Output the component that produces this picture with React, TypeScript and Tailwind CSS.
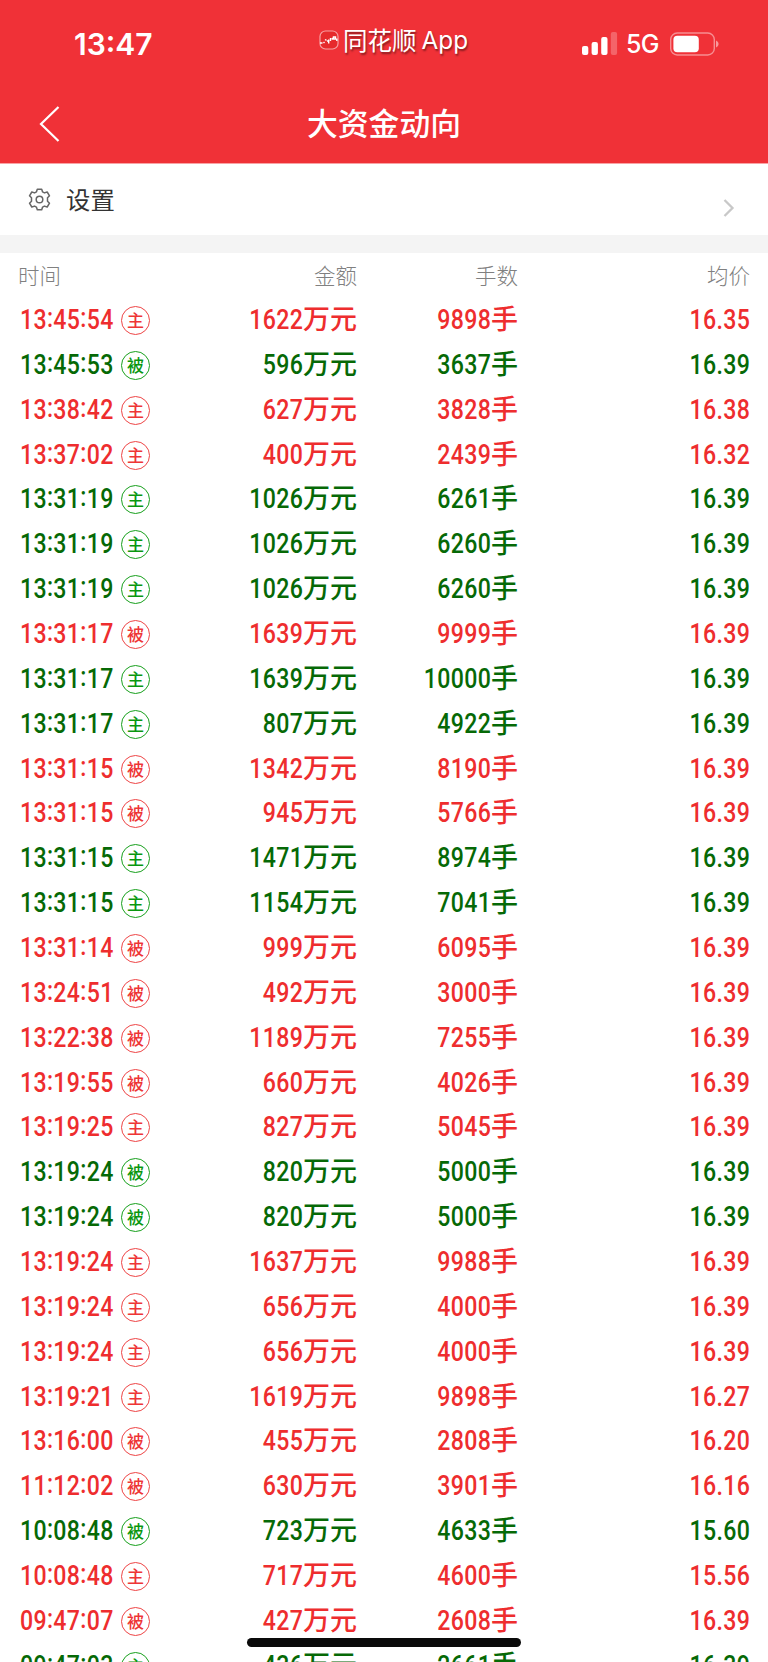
import React from "react";
import clsx from "clsx";

type Trade = {
  time: string;
  kind: "主" | "被";
  side: "buy" | "sell";
  amount: string;
  lots: string;
  price: string;
};

const t = (
  time: string,
  kind: Trade["kind"],
  side: Trade["side"],
  amount: string,
  lots: string,
  price: string,
): Trade => ({ time, kind, side, amount, lots, price });

const trades: Trade[] = [
  t("13:45:54", "主", "buy", "1622", "9898", "16.35"),
  t("13:45:53", "被", "sell", "596", "3637", "16.39"),
  t("13:38:42", "主", "buy", "627", "3828", "16.38"),
  t("13:37:02", "主", "buy", "400", "2439", "16.32"),
  t("13:31:19", "主", "sell", "1026", "6261", "16.39"),
  t("13:31:19", "主", "sell", "1026", "6260", "16.39"),
  t("13:31:19", "主", "sell", "1026", "6260", "16.39"),
  t("13:31:17", "被", "buy", "1639", "9999", "16.39"),
  t("13:31:17", "主", "sell", "1639", "10000", "16.39"),
  t("13:31:17", "主", "sell", "807", "4922", "16.39"),
  t("13:31:15", "被", "buy", "1342", "8190", "16.39"),
  t("13:31:15", "被", "buy", "945", "5766", "16.39"),
  t("13:31:15", "主", "sell", "1471", "8974", "16.39"),
  t("13:31:15", "主", "sell", "1154", "7041", "16.39"),
  t("13:31:14", "被", "buy", "999", "6095", "16.39"),
  t("13:24:51", "被", "buy", "492", "3000", "16.39"),
  t("13:22:38", "被", "buy", "1189", "7255", "16.39"),
  t("13:19:55", "被", "buy", "660", "4026", "16.39"),
  t("13:19:25", "主", "buy", "827", "5045", "16.39"),
  t("13:19:24", "被", "sell", "820", "5000", "16.39"),
  t("13:19:24", "被", "sell", "820", "5000", "16.39"),
  t("13:19:24", "主", "buy", "1637", "9988", "16.39"),
  t("13:19:24", "主", "buy", "656", "4000", "16.39"),
  t("13:19:24", "主", "buy", "656", "4000", "16.39"),
  t("13:19:21", "主", "buy", "1619", "9898", "16.27"),
  t("13:16:00", "被", "buy", "455", "2808", "16.20"),
  t("11:12:02", "被", "buy", "630", "3901", "16.16"),
  t("10:08:48", "被", "sell", "723", "4633", "15.60"),
  t("10:08:48", "主", "buy", "717", "4600", "15.56"),
  t("09:47:07", "被", "buy", "427", "2608", "16.39"),
  t("09:47:03", "主", "sell", "436", "2661", "16.39"),
];

const AppLogo = () => (
  <svg width="20" height="20" viewBox="0 0 20 20" fill="none">
    <rect x="1" y="1" width="18" height="18" rx="5.5" fill="#e62a2c" stroke="#fff" strokeOpacity="0.55" strokeWidth="1.2" />
    <path
      d="M1 13h2.500M4.500 13l1-1M6 9.500l1.500.8M8 11h1.600M9.700 9.500v4M11.500 8v3M12.800 9.500l1-1.500M14.500 7h2v2h-2zM17.800 8.500v2.500"
      stroke="#fff"
      strokeWidth="1.4"
    />
  </svg>
);

const StatusBar = () => (
  <div className="flex h-[88px] items-start text-white">
    <div className="w-[246px] pt-[26px] pl-[74px] font-['Inter'] text-[30px] leading-[36px] font-semibold">
      13:47
    </div>
    <div className="flex w-[335px] items-center pt-[21px] pl-[73px]">
      <AppLogo />
      <div className="ml-1 flex items-center gap-[5px] text-[24.5px] leading-[36px] [text-shadow:1px_2px_2px_rgba(0,0,0,0.45)]">
        <span>同花顺</span>
        <span className="mt-px font-['Inter'] text-[24.3px]">App</span>
      </div>
    </div>
    <div className="flex items-center pt-[26px]">
      <svg width="37" height="24" viewBox="0 0 37 24" fill="#fff">
        <rect x="1" y="14" width="6.3" height="9" rx="2" />
        <rect x="10.6" y="10" width="6.3" height="13" rx="2" />
        <rect x="20.2" y="5" width="6.3" height="18" rx="2" />
        <rect x="29.8" y="0" width="6.3" height="23" rx="2" opacity="0.25" />
      </svg>
      <span className="ml-[8px] w-[35px] font-['Inter'] text-[25px] leading-[36px] font-medium tracking-tight">
        5G
      </span>
      <svg className="ml-[9px]" width="50" height="24" viewBox="0 0 50 24" fill="none">
        <rect x="0.7" y="1" width="43.6" height="22" rx="6.5" stroke="#fff" strokeOpacity="0.45" strokeWidth="1.4" />
        <rect x="3.4" y="3.7" width="25.4" height="16.6" rx="4" fill="#fff" />
        <path d="M46 8.500c3.400 1.600 3.400 5.400 0 7z" fill="#fff" fillOpacity="0.5" />
      </svg>
    </div>
  </div>
);

const NavBar = () => (
  <div className="grid h-[75px] grid-cols-[1fr_auto_1fr] items-center text-white">
    <svg className="mt-[-4px] ml-[39px]" width="22" height="38" viewBox="0 0 22 38" fill="none">
      <path d="M19.500 2L2 19l17.500 17" stroke="#fff" strokeWidth="2.200" />
    </svg>
    <h1 className="mt-[-7px] text-[30.8px] leading-[44px] font-medium">大资金动向</h1>
  </div>
);

const SettingsRow = () => (
  <div className="flex h-[71px] items-center bg-white">
    <svg className="ml-[28px]" width="23" height="23" viewBox="0 0 23 23" fill="none" stroke="#666" strokeWidth="1.500">
      <path
        d="M9.300 1.200h4.400l.9 2.700 1.800 1 2.800-.9 2.300 3.800-2 2v3.400l2 2-2.300 3.800-2.800-.9-1.800 1-.9 2.700H9.300l-.9-2.700-1.800-1-2.800.9-2.300-3.800 2-2V9.800l-2-2L3.800 4l2.800.9 1.800-1z"
        strokeLinejoin="round"
      />
      <circle cx="11.500" cy="11.500" r="3.300" />
    </svg>
    <span className="mt-[-2px] ml-[15px] text-[24.4px] leading-[36px] text-[#333]">设置</span>
    <svg className="mt-[17px] mr-[33px] ml-auto" width="12" height="18" viewBox="0 0 12 18" fill="none">
      <path d="M1.500 1l8 8-8 8" stroke="#c8c8c8" strokeWidth="2.300" />
    </svg>
  </div>
);

// condensed figures, squeezed towards one edge
const Num = ({ value, left }: { value: string; left?: boolean }) => (
  <span
    className={clsx(
      "inline-block scale-x-[0.84] font-['Roboto'] text-[27.5px] tracking-[0.4px]",
      left ? "origin-left" : "origin-right",
    )}
  >
    {value.split(":").map((part, i) => (
      <React.Fragment key={i}>
        {i > 0 && <span className="relative -top-[2px]">:</span>}
        {part}
      </React.Fragment>
    ))}
  </span>
);

const TradeRow = ({ trade }: { trade: Trade }) => {
  const isBuy = trade.side === "buy";
  return (
    <div
      className={clsx(
        "grid h-[44.86px] grid-cols-[170px_167px_161px_232px] items-center pb-[2px] pl-[20px] text-right text-[27px] leading-[42px] font-medium",
        isBuy ? "text-[#ee2d2e]" : "text-[#066906]",
      )}
    >
      <div className="flex items-center">
        <span className="w-[101px] text-left">
          <Num value={trade.time} left />
        </span>
        <span
          className={clsx(
            "mt-[3px] flex h-[29px] w-[29px] shrink-0 items-center justify-center rounded-full border-[1.5px] pb-[2px] text-[17px] leading-none font-medium",
            isBuy ? "border-[#ee4445] text-[#ee3536]" : "border-[#17a01c] text-[#0a970f]",
          )}
        >
          {trade.kind}
        </span>
      </div>
      <div>
        <Num value={trade.amount} />万元
      </div>
      <div>
        <Num value={trade.lots} />手
      </div>
      <div>
        <Num value={trade.price} />
      </div>
    </div>
  );
};

const App = () => {
  return (
    <div className="relative h-[1662px] w-[768px] overflow-hidden bg-white font-['Noto_Sans_CJK_SC',sans-serif]">
      <header className="h-[164px] border-b border-[#f9a3a5] bg-[#f03137]">
        <StatusBar />
        <NavBar />
      </header>
      <SettingsRow />
      <div className="h-[18px] bg-[#f4f4f4]" />
      <div className="grid h-[44px] grid-cols-[172px_167px_161px_232px] items-center pl-[18px] text-right text-[21.5px] font-light text-[#808080]">
        <div className="text-left">时间</div>
        <div>金额</div>
        <div>手数</div>
        <div>均价</div>
      </div>
      <div>
        {trades.map((trade, i) => (
          <TradeRow key={i} trade={trade} />
        ))}
      </div>
      {/* home indicator */}
      <div className="absolute bottom-[15px] left-[247px] h-[9px] w-[274px] rounded-full bg-[#0a0a0a]" />
    </div>
  );
};

export default App;
